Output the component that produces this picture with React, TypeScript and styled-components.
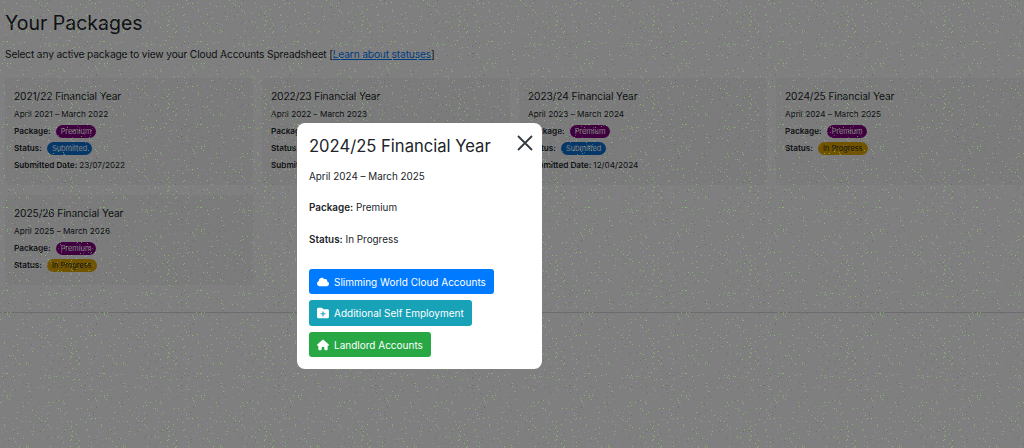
import React from "react";
import styled, { createGlobalStyle } from "styled-components";
import { FaCloud, FaFolderPlus, FaHouse } from "react-icons/fa6";

interface PackageInfo {
  year: string;
  range: string;
  status: "Submitted" | "In Progress";
  submitted?: string;
}

const packages: PackageInfo[] = [
  { year: "2021/22", range: "April 2021 – March 2022", status: "Submitted", submitted: "23/07/2022" },
  { year: "2022/23", range: "April 2022 – March 2023", status: "Submitted", submitted: "18/07/2023" },
  { year: "2023/24", range: "April 2023 – March 2024", status: "Submitted", submitted: "12/04/2024" },
  { year: "2024/25", range: "April 2024 – March 2025", status: "In Progress" },
  { year: "2025/26", range: "April 2025 – March 2026", status: "In Progress" },
];

// speckle on the dimmed backdrop, scattered over one repeating tile
const TILE_W = 97;
const TILE_H = 83;

function speckle(count: number, color: string, seed: number) {
  const dots: string[] = [];
  let n = seed;
  const next = () => {
    n = (n * 48271) % 2147483647;
    return n >> 8;
  };
  for (let i = 0; i < count; i++) {
    const x = next() % TILE_W;
    const y = next() % TILE_H;
    dots.push(`radial-gradient(circle at ${x + 0.5}px ${y + 0.5}px, ${color} 0.6px, transparent 0.9px)`);
  }
  return dots;
}

const noise = [
  ...speckle(130, "rgba(140, 215, 110, 0.6)", 4711),
  ...speckle(130, "rgba(170, 150, 205, 0.4)", 9157),
  ...speckle(80, "rgba(70, 70, 70, 0.3)", 2203),
].join(", ");

const GlobalStyle = createGlobalStyle`
  html, body {
    margin: 0;
    height: 100%;
    overflow: hidden;
    background: #fff;
  }

  body {
    font-family: Inter, "Liberation Sans", sans-serif;
    color: #212529;
  }
`;

const Page = styled.div`
  height: 448px;
  box-sizing: border-box;
`;

const Header = styled.div`
  padding: 10px 5px 0;
`;

const Title = styled.h1`
  margin: 0;
  font-size: 19.5px;
  line-height: 27px;
  font-weight: 400;
`;

const Intro = styled.p`
  margin: 8px 0 0;
  font-size: 10.2px;
  letter-spacing: -0.15px;
  line-height: 18px;

  a {
    color: #007bff;
    text-decoration: underline;
  }
`;

const Grid = styled.div`
  display: grid;
  grid-template-columns: repeat(4, 248px);
  column-gap: 9px;
  row-gap: 10px;
  margin-top: 15px;
  padding: 0 5px 27px;
  border-bottom: 1px solid #d8d8d8;
`;

const Card = styled.div`
  background: #f7f7f7;
  border-radius: 4px;
  padding: 9px 9px 11px;
  box-sizing: border-box;
`;

const CardTitle = styled.h3`
  margin: 0 0 1px;
  font-size: 10.2px;
  letter-spacing: -0.1px;
  line-height: 18px;
  font-weight: 400;
`;

const CardRow = styled.div<{ $tight?: boolean }>`
  display: flex;
  align-items: center;
  gap: ${(p) => (p.$tight ? "2px" : "5px")};
  font-size: 8.2px;
  line-height: 17px;
  white-space: pre;
`;

const Strong = styled.strong`
  font-weight: 600;
`;

const Badge = styled.span<{ $kind: string }>`
  font-size: 7.4px;
  line-height: 13px;
  padding: 0 5px;
  border-radius: 7px;
  color: ${(p) => (p.$kind === "In Progress" ? "#212529" : "#fff")};
  background: ${(p) =>
    p.$kind === "Premium" ? "#800080" : p.$kind === "Submitted" ? "#0a6ed1" : "#e0a800"};
`;

const Overlay = styled.div`
  position: fixed;
  inset: 0;
  background-color: rgba(0, 0, 0, 0.5);
  background-image: ${noise};
  background-size: ${TILE_W}px ${TILE_H}px;
  padding: 123px 0 0 297px;
  box-sizing: border-box;
`;

const Modal = styled.div`
  position: relative;
  width: 245px;
  height: 246px;
  box-sizing: border-box;
  padding: 12px 12px 0;
  background: #fff;
  border-radius: 8px;
`;

const Close = styled.button`
  position: absolute;
  top: 10px;
  right: 8px;
  width: 18px;
  height: 20px;
  padding: 0;
  border: 0;
  background: none;
  color: #343a40;
`;

const ModalTitle = styled.h2`
  margin: 0;
  font-size: 16.6px;
  line-height: 22px;
  font-weight: 400;
`;

const ModalText = styled.p`
  margin: 11px 0 0;
  font-size: 9.9px;
  line-height: 17px;

  & + & {
    margin-top: 14.4px;
  }
`;

const Actions = styled.div`
  display: flex;
  flex-direction: column;
  align-items: flex-start;
  gap: 6px;
  margin-top: 21px;
`;

const ActionButton = styled.button<{ $bg: string }>`
  display: flex;
  align-items: center;
  gap: 5px;
  height: 25.5px;
  padding: 0 8px;
  border: 0;
  border-radius: 3px;
  background: ${(p) => p.$bg};
  color: #fff;
  font: 400 10px Inter, "Liberation Sans", sans-serif;

  svg {
    width: auto;
    height: 12px;
  }
`;

export default function App() {
  return (
    <>
      <GlobalStyle />
      <Page>
        <Header>
          <Title>Your Packages</Title>
          <Intro>
            Select any active package to view your Cloud Accounts Spreadsheet [<a href="#">Learn about statuses</a>]
          </Intro>
        </Header>
        <Grid>
          {packages.map((item) => (
            <Card key={item.year}>
              <CardTitle>{item.year} Financial Year</CardTitle>
              <CardRow>{item.range}</CardRow>
              <CardRow>
                <Strong>Package:</Strong>
                <Badge $kind="Premium">Premium</Badge>
              </CardRow>
              <CardRow>
                <Strong>Status:</Strong>
                <Badge $kind={item.status}>{item.status}</Badge>
              </CardRow>
              {item.submitted && (
                <CardRow $tight>
                  <Strong>Submitted Date:</Strong>
                  {item.submitted}
                </CardRow>
              )}
            </Card>
          ))}
        </Grid>
      </Page>
      <Overlay>
        <Modal>
          <Close aria-label="Close">
            <svg width="18" height="20" viewBox="0 0 18 20" fill="none" stroke="currentColor" strokeWidth="1.8">
              <path d="M2 3l14 14M16 3L2 17" />
            </svg>
          </Close>
          <ModalTitle>2024/25 Financial Year</ModalTitle>
          <ModalText>April 2024 – March 2025</ModalText>
          <ModalText>
            <Strong>Package:</Strong> Premium
          </ModalText>
          <ModalText>
            <Strong>Status:</Strong> In Progress
          </ModalText>
          <Actions>
            <ActionButton $bg="#007bff">
              <FaCloud />
              Slimming World Cloud Accounts
            </ActionButton>
            <ActionButton $bg="#17a2b8">
              <FaFolderPlus />
              Additional Self Employment
            </ActionButton>
            <ActionButton $bg="#28a745">
              <FaHouse />
              Landlord Accounts
            </ActionButton>
          </Actions>
        </Modal>
      </Overlay>
    </>
  );
}
